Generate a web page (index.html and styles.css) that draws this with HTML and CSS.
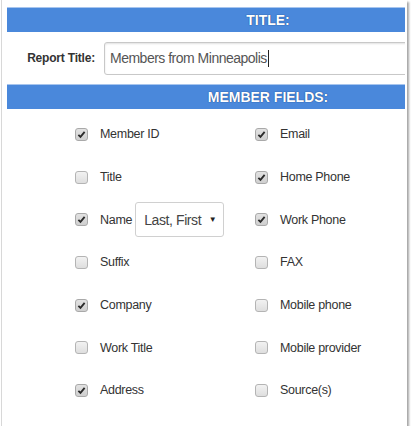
FILE: index.html
```html
<!DOCTYPE html>
<html>
<head>
<meta charset="utf-8">
<link rel="stylesheet" href="styles.css">
</head>
<body>
<div class="panel">
 <div class="inner">
  <div class="bar"><span class="bar-text">TITLE:</span></div>
  <div class="title-row">
    <label class="title-label">Report Title:</label>
    <div class="title-input">Members from Minneapolis<span class="caret"></span></div>
  </div>
  <div class="bar"><span class="bar-text">MEMBER FIELDS:</span></div>
  <div class="fields">
    <div class="field"><span class="cb on"><svg viewBox="0 0 12 12"><path d="M2.6 6.4 L4.9 8.6 L9.4 3.2" /></svg></span><span class="lbl">Member ID</span></div>
    <div class="field"><span class="cb on"><svg viewBox="0 0 12 12"><path d="M2.6 6.4 L4.9 8.6 L9.4 3.2" /></svg></span><span class="lbl">Email</span></div>
    <div class="field"><span class="cb"></span><span class="lbl">Title</span></div>
    <div class="field"><span class="cb on"><svg viewBox="0 0 12 12"><path d="M2.6 6.4 L4.9 8.6 L9.4 3.2" /></svg></span><span class="lbl">Home Phone</span></div>
    <div class="field"><span class="cb on"><svg viewBox="0 0 12 12"><path d="M2.6 6.4 L4.9 8.6 L9.4 3.2" /></svg></span><span class="lbl">Name</span>
      <div class="select"><span class="sel-text">Last, First</span><span class="arrow">▼</span></div>
    </div>
    <div class="field"><span class="cb on"><svg viewBox="0 0 12 12"><path d="M2.6 6.4 L4.9 8.6 L9.4 3.2" /></svg></span><span class="lbl">Work Phone</span></div>
    <div class="field"><span class="cb"></span><span class="lbl">Suffix</span></div>
    <div class="field"><span class="cb"></span><span class="lbl">FAX</span></div>
    <div class="field"><span class="cb on"><svg viewBox="0 0 12 12"><path d="M2.6 6.4 L4.9 8.6 L9.4 3.2" /></svg></span><span class="lbl">Company</span></div>
    <div class="field"><span class="cb"></span><span class="lbl">Mobile phone</span></div>
    <div class="field"><span class="cb"></span><span class="lbl">Work Title</span></div>
    <div class="field"><span class="cb"></span><span class="lbl">Mobile provider</span></div>
    <div class="field"><span class="cb on"><svg viewBox="0 0 12 12"><path d="M2.6 6.4 L4.9 8.6 L9.4 3.2" /></svg></span><span class="lbl">Address</span></div>
    <div class="field"><span class="cb"></span><span class="lbl">Source(s)</span></div>
  </div>
 </div>
</div>
</body>
</html>
```
FILE: styles.css
```css
html, body {
  margin: 0;
  padding: 0;
  background: #ffffff;
}
body {
  font-family: "Liberation Sans", Arial, sans-serif;
  color: #333;
}
.panel {
  margin-left: 1px;
  width: 406px;
  height: 426px;
  box-sizing: border-box;
  border-left: 1px solid #d8d8d8;
  box-shadow: 2px 2px 2px rgba(0,0,0,0.35);
  background: #fff;
  padding: 7px 2px 0 5px;
}
.inner {
  height: 100%;
  overflow: hidden;
}
.bar {
  height: 24px;
  background: #4a88db;
  border-top: 1px solid #a7c5ee;
  display: flex;
  align-items: center;
  justify-content: center;
  padding-left: 124px;
  font-weight: bold;
  font-size: 14px;
  color: #fff;
  text-shadow: 0 0 1px #1f4f90, 0 0 1px #1f4f90;
}
.bar-text {
  white-space: nowrap;
}
.title-row {
  height: 52px;
  display: flex;
  align-items: center;
}
.title-label {
  flex: none;
  width: 88px;
  text-align: right;
  white-space: nowrap;
  font-weight: bold;
  font-size: 12px;
  letter-spacing: -0.2px;
  color: #333;
  margin-right: 9px;
}
.title-input {
  flex: none;
  width: 400px;
  height: 33px;
  box-sizing: border-box;
  border: 1px solid #c8c8c8;
  border-radius: 3px;
  box-shadow: inset 0 1px 2px rgba(0,0,0,0.12);
  display: flex;
  align-items: center;
  padding-left: 5px;
  font-size: 14px;
  letter-spacing: -0.5px;
  color: #555;
  white-space: nowrap;
}
.caret {
  display: inline-block;
  width: 1px;
  height: 17px;
  background: #222;
  margin-left: 1px;
}
.fields {
  display: grid;
  grid-template-columns: 180px 180px;
  grid-auto-rows: 42.7px;
  padding-left: 68px;
  padding-top: 4px;
}
.field {
  display: flex;
  align-items: center;
  font-size: 12.5px;
  letter-spacing: -0.3px;
  color: #333;
}
.cb {
  width: 11px;
  height: 11px;
  border: 1px solid #b4b4b4;
  border-radius: 3px;
  background: linear-gradient(#f2f2f2, #dedede);
  margin-right: 12px;
  display: flex;
  align-items: center;
  justify-content: center;
  flex: none;
}
.cb.on {
  background: linear-gradient(#e2e2e2, #cfcfcf);
  border-color: #a9a9a9;
}
.cb svg {
  width: 11px;
  height: 11px;
}
.cb svg path {
  fill: none;
  stroke: #2a2a2a;
  stroke-width: 2;
}
.lbl {
  white-space: nowrap;
}
.select {
  margin-left: 3px;
  width: 89px;
  height: 35px;
  box-sizing: border-box;
  border: 1px solid #d0d0d0;
  border-radius: 3px;
  display: flex;
  align-items: center;
  justify-content: space-between;
  padding: 0 7px 0 8px;
  font-size: 14px;
  letter-spacing: -0.4px;
  color: #444;
  flex: none;
}
.sel-text {
  white-space: nowrap;
}
.arrow {
  font-size: 8px;
  color: #222;
}
```
